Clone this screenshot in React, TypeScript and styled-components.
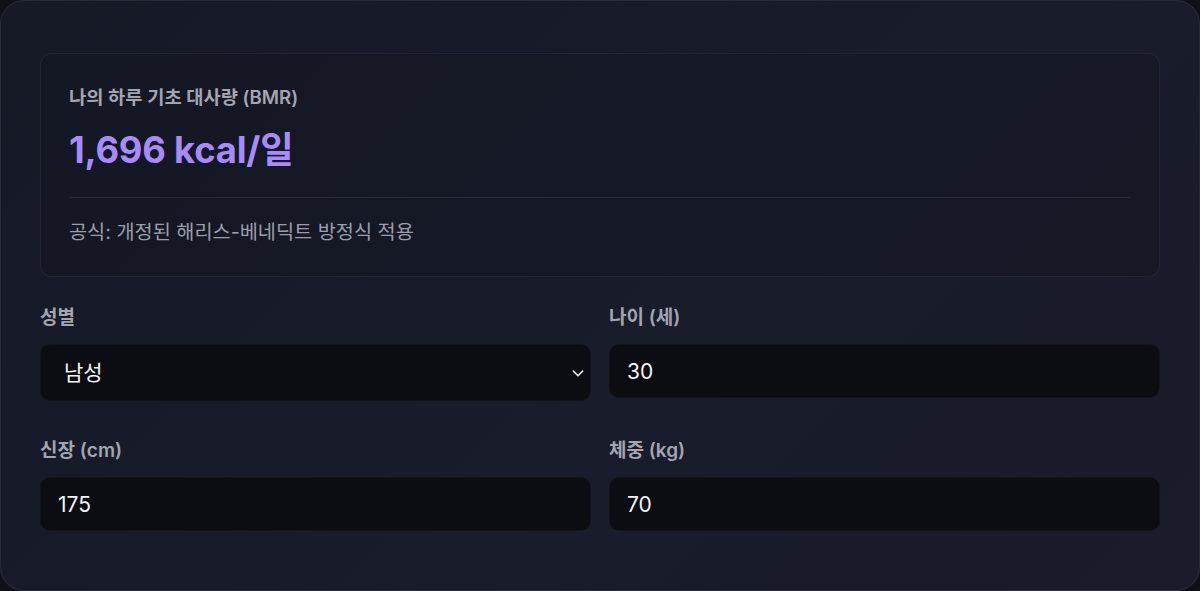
import React, { ChangeEvent, useState } from 'react'
import styled, { createGlobalStyle } from 'styled-components'

const GlobalStyle = createGlobalStyle`
  html, body {
    margin: 0;
    padding: 0;
    background: #0f111a;
  }
  body {
    font-family: Inter, "Noto Sans CJK KR", "Noto Sans", sans-serif;
    -webkit-font-smoothing: antialiased;
  }
  * { box-sizing: border-box; }
`

const Card = styled.section`
  width: 1200px;
  height: 591px;
  border-radius: 24px;
  border: 1px solid rgba(255, 255, 255, 0.07);
  background: linear-gradient(135deg, #161926 0%, #181c2b 55%, #1a1b2b 100%);
  padding: 52px 39px 0;
`

const ResultBox = styled.div`
  border: 1px solid rgba(255, 255, 255, 0.06);
  border-radius: 12px;
  background: rgba(20, 22, 34, 0.55);
  padding: 31px 28px 30px;
`

const ResultTitle = styled.div`
  font-size: 18.7px;
  line-height: 26px;
  font-weight: 600;
  color: #a3a5b1;
`

const ResultValue = styled.div`
  margin-top: 17px;
  font-size: 36.4px;
  line-height: 44px;
  font-weight: 700;
  letter-spacing: -0.2px;
  color: #a78bfa;
`

const Divider = styled.hr`
  margin: 25px 0 20px;
  border: 0;
  border-top: 1px solid rgba(255, 255, 255, 0.08);
`

const Formula = styled.div`
  font-size: 19.7px;
  line-height: 28px;
  color: #9c9ea9;
`

const Form = styled.div`
  margin-top: 28px;
  display: grid;
  grid-template-columns: 1fr 1fr;
  column-gap: 18px;
  row-gap: 37px;
`

const Field = styled.label`
  display: flex;
  flex-direction: column;
  gap: 13px;
`

const Label = styled.span`
  font-size: 19px;
  line-height: 26px;
  font-weight: 600;
  color: #a3a5b1;
`

const controlBase = `
  width: 100%;
  border: 1px solid rgba(255, 255, 255, 0.03);
  border-radius: 10px;
  background: #0c0d12;
  color: #f4f4f6;
  font-family: inherit;
  font-size: 21px;
  outline: none;
`

const SelectWrap = styled.div`
  position: relative;
`

const Select = styled.select`
  ${controlBase}
  height: 57px;
  padding: 0 44px 0 23px;
  appearance: none;
`

const Chevron = styled.svg`
  position: absolute;
  right: 2px;
  top: 50%;
  transform: translateY(-50%);
  pointer-events: none;
`

const Input = styled.input`
  ${controlBase}
  height: 54px;
  padding: 0 17px;
`

interface BmrForm {
  gender: string
  age: string
  height: string
  weight: string
}

const initialForm: BmrForm = {
  gender: 'male',
  age: '30',
  height: '175',
  weight: '70',
}

// revised Harris-Benedict
const calcBmr = (f: BmrForm): number => {
  const w = Number(f.weight)
  const h = Number(f.height)
  const a = Number(f.age)
  if (f.gender === 'male') return 88.362 + 13.397 * w + 4.799 * h - 5.677 * a
  return 447.593 + 9.247 * w + 3.098 * h - 4.33 * a
}

function App() {
  const [form, setForm] = useState<BmrForm>(initialForm)

  const handleChange = (e: ChangeEvent<HTMLInputElement | HTMLSelectElement>): void => {
    setForm({ ...form, [e.target.name]: e.target.value })
  }

  const bmr = Math.round(calcBmr(form))

  return (
    <>
      <GlobalStyle />
      <Card>
        <ResultBox>
          <ResultTitle>나의 하루 기초 대사량 (BMR)</ResultTitle>
          <ResultValue>{bmr.toLocaleString('en-US')} kcal/일</ResultValue>
          <Divider />
          <Formula>공식: 개정된 해리스-베네딕트 방정식 적용</Formula>
        </ResultBox>

        <Form>
          <Field>
            <Label>성별</Label>
            <SelectWrap>
              <Select name="gender" value={form.gender} onChange={handleChange}>
                <option value="male">남성</option>
                <option value="female">여성</option>
              </Select>
              <Chevron width="22" height="22" viewBox="0 0 24 24" fill="none" stroke="#e5e5ea" strokeWidth="1.8" strokeLinecap="round" strokeLinejoin="round">
                <path d="M7 10l5 5 5-5" />
              </Chevron>
            </SelectWrap>
          </Field>
          <Field>
            <Label>나이 (세)</Label>
            <Input name="age" type="text" value={form.age} onChange={handleChange} />
          </Field>
          <Field>
            <Label>신장 (cm)</Label>
            <Input name="height" type="text" value={form.height} onChange={handleChange} />
          </Field>
          <Field>
            <Label>체중 (kg)</Label>
            <Input name="weight" type="text" value={form.weight} onChange={handleChange} />
          </Field>
        </Form>
      </Card>
    </>
  )
}

export default App
